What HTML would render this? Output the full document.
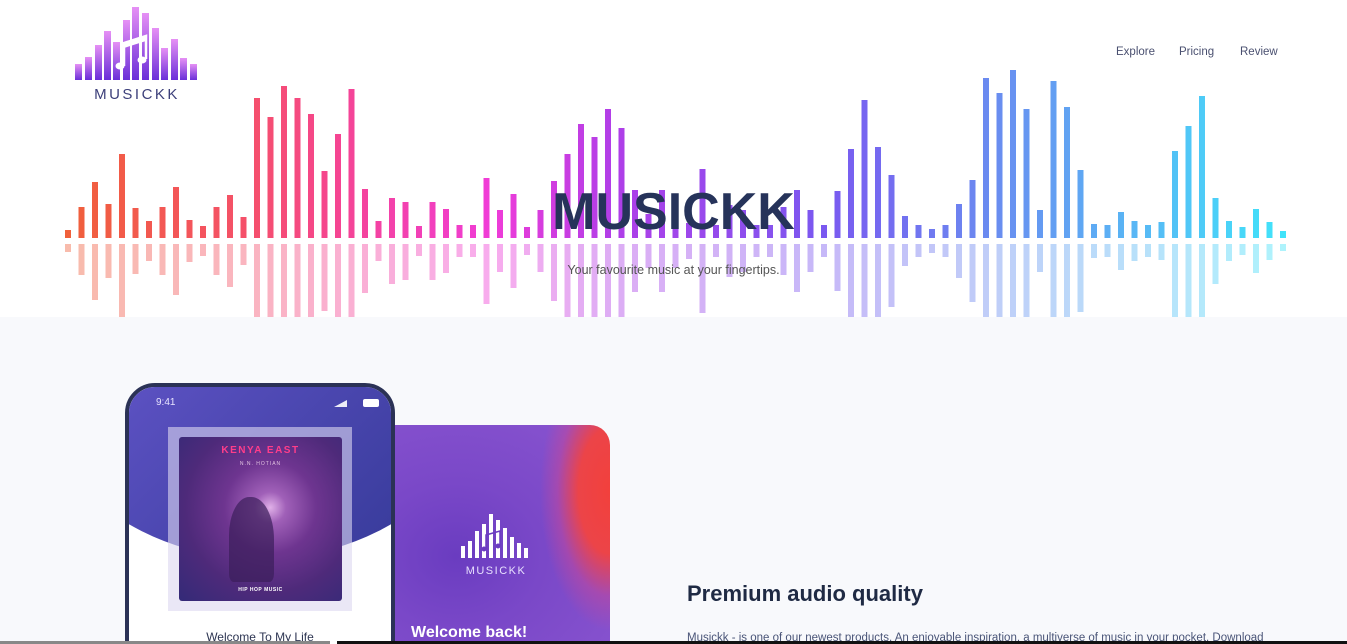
<!DOCTYPE html>
<html><head><meta charset="utf-8"><style>
*{margin:0;padding:0;box-sizing:border-box}
html,body{width:1347px;height:644px;overflow:hidden}
body{background:#f8f9fc;font-family:"Liberation Sans",sans-serif;position:relative}
.hero{position:absolute;left:0;top:0;width:1347px;height:317px;background:#fff;overflow:hidden}
.nav{position:absolute;top:46px;font-size:11.5px;color:#4a5070}
.title{position:absolute;left:0;width:1347px;top:182px;text-align:center;font-size:52px;font-weight:bold;color:#26335a}
.sub{position:absolute;left:0;width:1347px;top:263px;text-align:center;font-size:12.5px;color:#555}
.abs{position:absolute}
</style></head><body>
<div class="hero">
<svg class="abs" style="left:0;top:0" width="1347" height="317">
<defs>
<linearGradient id="g" gradientUnits="userSpaceOnUse" x1="65" y1="0" x2="1286" y2="0">
<stop offset="0" stop-color="#f0603a"/><stop offset="0.15" stop-color="#f5506a"/><stop offset="0.22" stop-color="#f54590"/><stop offset="0.35" stop-color="#f03cd8"/><stop offset="0.45" stop-color="#b03ee8"/><stop offset="0.62" stop-color="#7a58f0"/><stop offset="0.76" stop-color="#6a8cf0"/><stop offset="0.88" stop-color="#58b8f5"/><stop offset="1" stop-color="#40e4fa"/>
</linearGradient>
<g id="bars" fill="url(#g)">
<rect x="65" y="230" width="6" height="8"/><rect x="78.5" y="207" width="6" height="31"/><rect x="92" y="182" width="6" height="56"/><rect x="105.5" y="204" width="6" height="34"/><rect x="119" y="154" width="6" height="84"/><rect x="132.5" y="208" width="6" height="30"/><rect x="146" y="221" width="6" height="17"/><rect x="159.5" y="207" width="6" height="31"/><rect x="173" y="187" width="6" height="51"/><rect x="186.5" y="220" width="6" height="18"/><rect x="200" y="226" width="6" height="12"/><rect x="213.5" y="207" width="6" height="31"/><rect x="227" y="195" width="6" height="43"/><rect x="240.5" y="217" width="6" height="21"/><rect x="254" y="98" width="6" height="140"/><rect x="267.5" y="117" width="6" height="121"/><rect x="281" y="86" width="6" height="152"/><rect x="294.5" y="98" width="6" height="140"/><rect x="308" y="114" width="6" height="124"/><rect x="321.5" y="171" width="6" height="67"/><rect x="335" y="134" width="6" height="104"/><rect x="348.5" y="89" width="6" height="149"/><rect x="362" y="189" width="6" height="49"/><rect x="375.5" y="221" width="6" height="17"/><rect x="389" y="198" width="6" height="40"/><rect x="402.5" y="202" width="6" height="36"/><rect x="416" y="226" width="6" height="12"/><rect x="429.5" y="202" width="6" height="36"/><rect x="443" y="209" width="6" height="29"/><rect x="456.5" y="225" width="6" height="13"/><rect x="470" y="225" width="6" height="13"/><rect x="483.5" y="178" width="6" height="60"/><rect x="497" y="210" width="6" height="28"/><rect x="510.5" y="194" width="6" height="44"/><rect x="524" y="227" width="6" height="11"/><rect x="537.5" y="210" width="6" height="28"/><rect x="551" y="181" width="6" height="57"/><rect x="564.5" y="154" width="6" height="84"/><rect x="578" y="124" width="6" height="114"/><rect x="591.5" y="137" width="6" height="101"/><rect x="605" y="109" width="6" height="129"/><rect x="618.5" y="128" width="6" height="110"/><rect x="632" y="190" width="6" height="48"/><rect x="645.5" y="214" width="6" height="24"/><rect x="659" y="190" width="6" height="48"/><rect x="672.5" y="214" width="6" height="24"/><rect x="686" y="223" width="6" height="15"/><rect x="699.5" y="169" width="6" height="69"/><rect x="713" y="225" width="6" height="13"/><rect x="726.5" y="205" width="6" height="33"/><rect x="740" y="210" width="6" height="28"/><rect x="753.5" y="225" width="6" height="13"/><rect x="767" y="225" width="6" height="13"/><rect x="780.5" y="207" width="6" height="31"/><rect x="794" y="190" width="6" height="48"/><rect x="807.5" y="210" width="6" height="28"/><rect x="821" y="225" width="6" height="13"/><rect x="834.5" y="191" width="6" height="47"/><rect x="848" y="149" width="6" height="89"/><rect x="861.5" y="100" width="6" height="138"/><rect x="875" y="147" width="6" height="91"/><rect x="888.5" y="175" width="6" height="63"/><rect x="902" y="216" width="6" height="22"/><rect x="915.5" y="225" width="6" height="13"/><rect x="929" y="229" width="6" height="9"/><rect x="942.5" y="225" width="6" height="13"/><rect x="956" y="204" width="6" height="34"/><rect x="969.5" y="180" width="6" height="58"/><rect x="983" y="78" width="6" height="160"/><rect x="996.5" y="93" width="6" height="145"/><rect x="1010" y="70" width="6" height="168"/><rect x="1023.5" y="109" width="6" height="129"/><rect x="1037" y="210" width="6" height="28"/><rect x="1050.5" y="81" width="6" height="157"/><rect x="1064" y="107" width="6" height="131"/><rect x="1077.5" y="170" width="6" height="68"/><rect x="1091" y="224" width="6" height="14"/><rect x="1104.5" y="225" width="6" height="13"/><rect x="1118" y="212" width="6" height="26"/><rect x="1131.5" y="221" width="6" height="17"/><rect x="1145" y="225" width="6" height="13"/><rect x="1158.5" y="222" width="6" height="16"/><rect x="1172" y="151" width="6" height="87"/><rect x="1185.5" y="126" width="6" height="112"/><rect x="1199" y="96" width="6" height="142"/><rect x="1212.5" y="198" width="6" height="40"/><rect x="1226" y="221" width="6" height="17"/><rect x="1239.5" y="227" width="6" height="11"/><rect x="1253" y="209" width="6" height="29"/><rect x="1266.5" y="222" width="6" height="16"/><rect x="1280" y="231" width="6" height="7"/>
</g>
</defs>
<use href="#bars"/>
<use href="#bars" transform="matrix(1,0,0,-1,0,482)" opacity="0.42"/>
</svg>
<svg class="abs" style="left:70px;top:4px" width="135" height="100">
<defs><linearGradient id="lg" x1="0" y1="0" x2="0" y2="1"><stop offset="0" stop-color="#e690f5"/><stop offset="1" stop-color="#6a2fd8"/></linearGradient></defs>
<g fill="url(#lg)" transform="translate(-70,-4)">
<rect x="75" y="64" width="7" height="16"/><rect x="85" y="57" width="7" height="23"/><rect x="95" y="45" width="7" height="35"/><rect x="104" y="31" width="7" height="49"/><rect x="113" y="42" width="7" height="38"/><rect x="123" y="20" width="7" height="60"/><rect x="132" y="7" width="7" height="73"/><rect x="142" y="13" width="7" height="67"/><rect x="152" y="28" width="7" height="52"/><rect x="161" y="48" width="7" height="32"/><rect x="171" y="39" width="7" height="41"/><rect x="180" y="58" width="7" height="22"/><rect x="190" y="64" width="7" height="16"/>
</g>
<g transform="translate(-70,-4)" fill="#fff" stroke="#fff">
<path d="M124 66 L124 43 L146 36 L146 59" fill="none" stroke-width="2.5"/>
<path d="M124 43 L146 36 L146 41 L124 48Z" stroke="none"/>
<ellipse cx="120" cy="66" rx="4.5" ry="3.5" stroke="none"/>
<ellipse cx="142" cy="60" rx="4.5" ry="3.5" stroke="none"/>
</g>
<text x="67" y="95" text-anchor="middle" font-family="Liberation Sans" font-size="15" letter-spacing="2.5" fill="#3c3f7a">MUSICKK</text>
</svg>
<div class="nav" style="left:1116px">Explore</div>
<div class="nav" style="left:1179px">Pricing</div>
<div class="nav" style="left:1240px">Review</div>
<div class="title">MUSICKK</div>
<div class="sub">Your favourite music at your fingertips.</div>
</div>

<div class="abs" style="left:390px;top:425px;width:220px;height:219px;border-radius:0 20px 0 0;overflow:hidden;background:radial-gradient(ellipse 70px 140px at 100% 30%,#f2403c 0%,#ec4448 45%,rgba(200,70,150,0.5) 75%,rgba(130,70,200,0) 100%),radial-gradient(ellipse at 30% 60%,#6a3cc0 0%,#7a48c8 40%,#8a55d0 100%)">
<svg class="abs" style="left:70px;top:88px" width="75" height="65">
<g fill="#fff"><rect x="1" y="33" width="4" height="12"/><rect x="8" y="28" width="4" height="17"/><rect x="15" y="18" width="4" height="27"/><rect x="22" y="11" width="4" height="34"/><rect x="29" y="1" width="4" height="44"/><rect x="36" y="7" width="4" height="38"/><rect x="43" y="15" width="4" height="30"/><rect x="50" y="24" width="4" height="21"/><rect x="57" y="30" width="4" height="15"/><rect x="64" y="35" width="4" height="10"/></g>
<path d="M26 36 L26 22 L40 18 L40 33" stroke="#6a3cc0" stroke-width="1.5" fill="none"/>
<circle cx="24" cy="36" r="2.5" fill="#6a3cc0"/><circle cx="38" cy="33" r="2.5" fill="#6a3cc0"/>
<text x="36" y="61" text-anchor="middle" font-family="Liberation Sans" font-size="11" letter-spacing="1.5" fill="#e8e0ff">MUSICKK</text>
</svg>
<div class="abs" style="left:21px;top:199px;color:#fff;font-weight:bold;font-size:16px">Welcome back!</div>
</div>

<div class="abs" style="left:125px;top:383px;width:270px;height:290px;border:4px solid #2b3256;border-radius:30px;background:#fff;overflow:hidden">
<div class="abs" style="left:-120px;top:-300px;width:502px;height:472px;border-radius:50%;background:linear-gradient(135deg,#9a7ae6 0%,#5a50c0 45%,#2e3590 100%)"></div>
<div class="abs" style="left:27px;top:10px;color:#e8e4ff;font-size:10px">9:41</div>
<div class="abs" style="left:205px;top:13px;width:13px;height:7px;background:#fff;opacity:.9;clip-path:polygon(0 100%,100% 0,100% 100%)"></div>
<div class="abs" style="left:234px;top:12px;width:16px;height:8px;background:#fff;border-radius:2px"></div>
<div class="abs" style="left:39px;top:40px;width:184px;height:184px;background:rgba(220,215,240,0.6)"></div>
<div class="abs" style="left:50px;top:50px;width:163px;height:164px;border-radius:3px;background:radial-gradient(circle at 56% 43%,#e0b0e8 0%,#a060b8 12%,#6e3590 35%,#4e2a7a 65%,#332a78 100%)">
<div style="position:absolute;left:0;width:100%;top:8px;text-align:center;color:#ff3d8a;font-weight:bold;font-size:10px;letter-spacing:1.5px">KENYA EAST</div>
<div style="position:absolute;left:0;width:100%;top:24px;text-align:center;color:#e0c0e0;font-size:5px;letter-spacing:1px">N.N. HOTIAN</div>
<div style="position:absolute;left:0;width:100%;top:150px;text-align:center;color:#fff;font-weight:bold;font-size:5px;letter-spacing:.5px">HIP HOP MUSIC</div>
<div style="position:absolute;left:50px;top:60px;width:45px;height:85px;border-radius:45% 50% 10% 10%;background:#3a1e5a;opacity:.7"></div>
</div>
<div class="abs" style="left:0;width:100%;top:243px;text-align:center;color:#2d3552;font-size:12px">Welcome To My Life</div>
</div>

<div class="abs" style="left:687px;top:581px;font-size:22px;font-weight:bold;color:#1f2a44">Premium audio quality</div>
<div class="abs" style="left:687px;top:632px;font-size:11.5px;color:#4a5578;white-space:nowrap">Musickk - is one of our newest products. An enjoyable inspiration, a multiverse of music in your pocket. Download</div>
<div class="abs" style="left:0;top:641px;width:330px;height:3px;background:#888"></div>
<div class="abs" style="left:337px;top:641px;width:1010px;height:3px;background:#111"></div>
</body></html>
